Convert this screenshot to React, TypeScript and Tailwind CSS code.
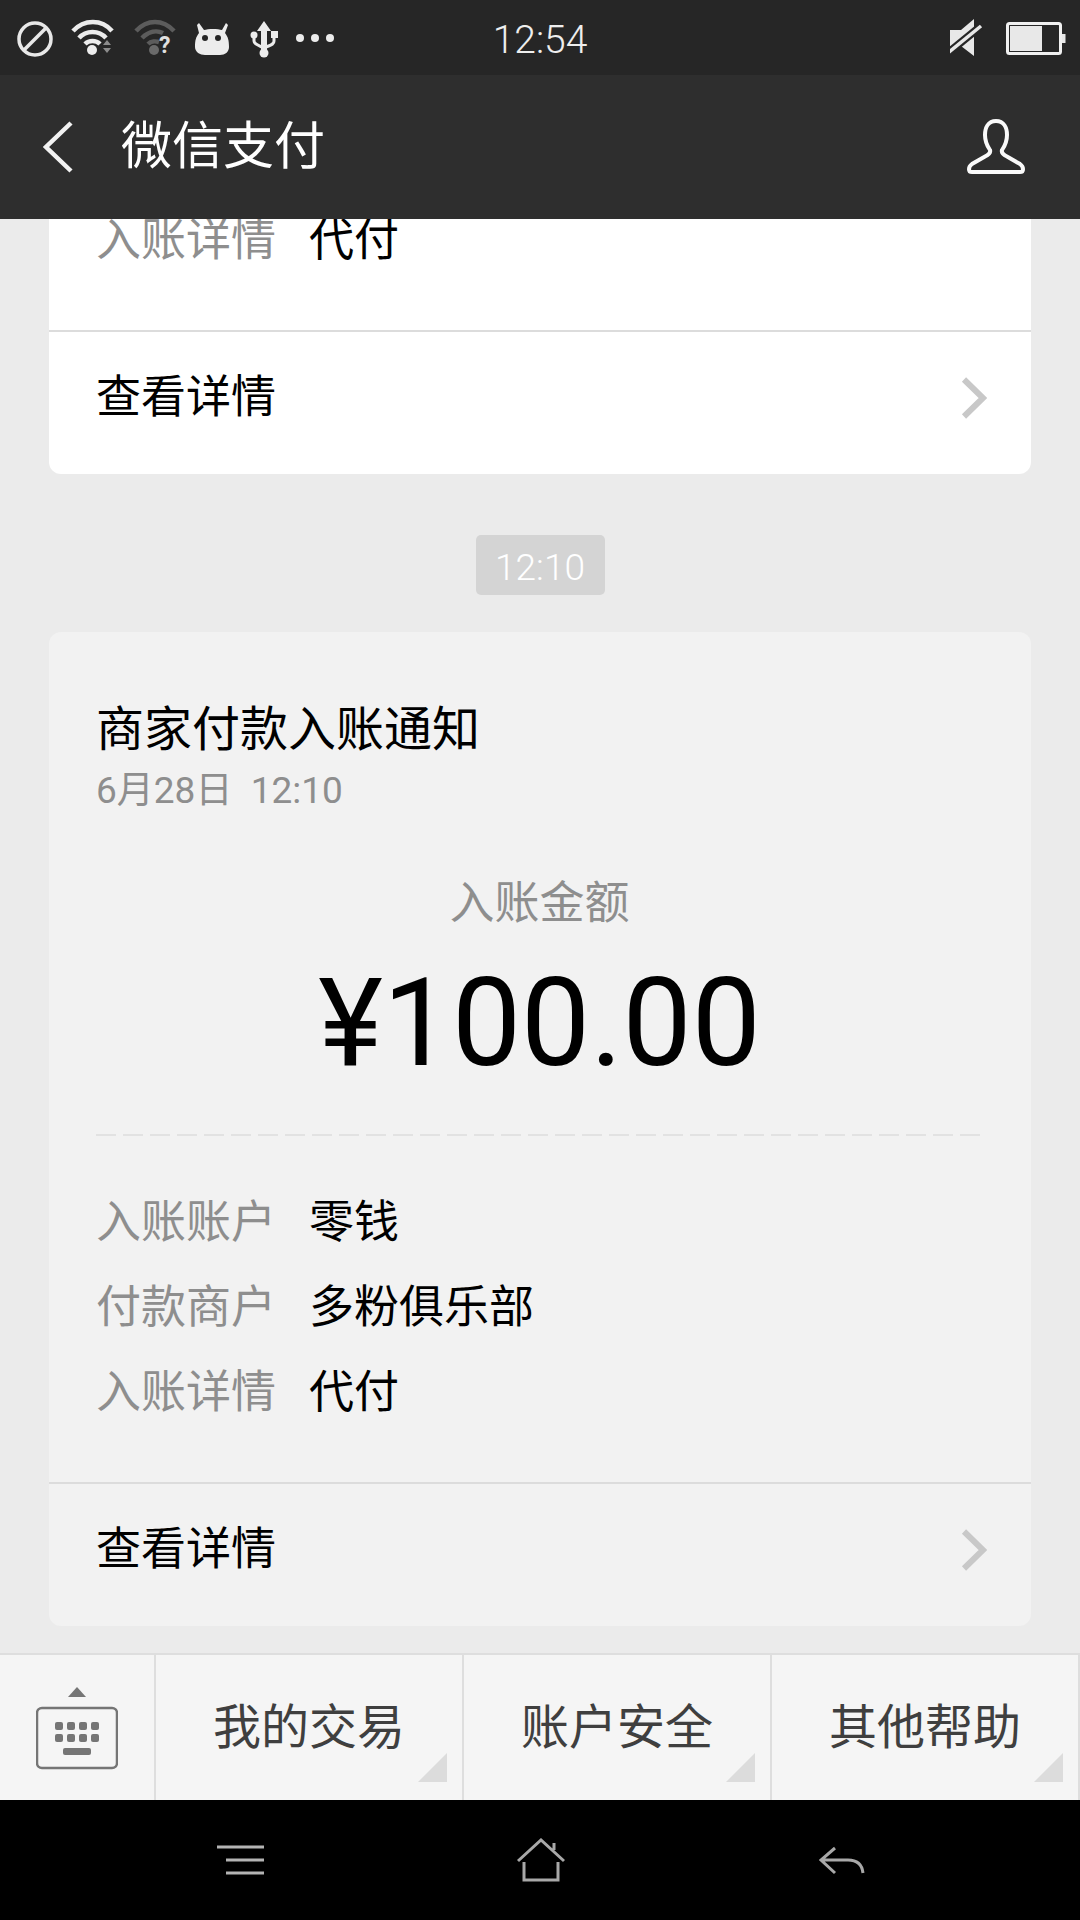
import React from 'react';

const fontStack = "font-['Roboto','Noto_Sans_CJK_SC',sans-serif]";

const Chevron = () => (
  <svg width="26" height="42" viewBox="0 0 26 42" fill="none" className="mr-[1px]">
    <path d="M3 2.5 L22 21 L3 39.5" stroke="#c8c8c8" strokeWidth="6" />
  </svg>
);

const Row = ({ label, value }: { label: string; value: string }) => (
  <div className="flex h-[85px] items-center text-[45px] leading-[85px]">
    <span className="w-[213px] text-[#8e8e8e]">{label}</span>
    <span className="text-black">{value}</span>
  </div>
);

const DetailLink = () => (
  <div className="flex h-[144px] items-center justify-between border-t-2 border-[#dcdcdc] pb-[10px] pl-[47px] pr-[43px] text-[45px] text-black">
    <span>查看详情</span>
    <Chevron />
  </div>
);

const StatusIconsLeft = () => (
  <svg width="350" height="74" viewBox="0 0 350 74" fill="none">
    <circle cx="35" cy="38" r="16" stroke="#e8e8e8" strokeWidth="3.5" />
    <path d="M24 49 L46 27" stroke="#e8e8e8" strokeWidth="3.5" />
    <g stroke="#ececec" strokeWidth="4.5" fill="none">
      <path d="M73 30 C84 18 102 18 112 30" />
      <path d="M79 37 C86 29 99 29 106 37" />
      <path d="M85 43 C89 39 96 39 100 43" />
    </g>
    <circle cx="92" cy="49" r="5" fill="#ececec" />
    <path d="M103 44 L111 44 L107 39 Z M103 47 L111 47 L107 52 Z" fill="#8c8c8c" />
    <g stroke="#5c5c5c" strokeWidth="4.5" fill="none">
      <path d="M136 30 C147 18 163 18 174 30" />
      <path d="M142 37 C149 30 157 29 163 32" />
      <path d="M148 43 C151 40 156 40 159 41" />
    </g>
    <circle cx="154" cy="49" r="5" fill="#6a6a6a" />
    <text x="159" y="52" fill="#e0e0e0" fontSize="23" fontWeight="700" fontFamily="Roboto, sans-serif">?</text>
    <path d="M199 22 L204 29 C208 27.500 218 27.500 222 29 L226 22 L228 24 L225 32 C228 36 229 39 229 46 C229 51 225 54 220 54 L205 54 C200 54 195 51 195 46 C195 39 196 36 199 32 L197 24 Z" fill="#ececec" />
    <circle cx="205" cy="37" r="3" fill="#262626" />
    <circle cx="218" cy="37" r="3" fill="#262626" />
    <path d="M264 20 L271 30 L267 30 L267 50 L261 50 L261 30 L257 30 Z" fill="#ececec" />
    <circle cx="264" cy="52" r="4.500" fill="#ececec" />
    <path d="M254 36 L254 40 C254 43 258 44 264 47 C270 44 274 44 274 40 L274 36" stroke="#ececec" strokeWidth="3" />
    <circle cx="254" cy="34" r="3.500" fill="#ececec" />
    <rect x="271" y="30" width="7" height="7" fill="#ececec" />
    <circle cx="300" cy="37" r="4" fill="#ececec" />
    <circle cx="315" cy="37" r="4" fill="#ececec" />
    <circle cx="330" cy="37" r="4" fill="#ececec" />
  </svg>
);

const StatusIconsRight = () => (
  <svg width="130" height="74" viewBox="950 0 130 74" fill="none">
    <path d="M950 29 L961 29 L974 18 L974 55 L961 45 L950 45 Z" fill="#e8e8e8" />
    <path d="M948 52 L981 25" stroke="#262626" strokeWidth="8" />
    <path d="M948 52 L981 25" stroke="#e8e8e8" strokeWidth="3.5" />
    <rect x="1007.500" y="22.500" width="53" height="30" rx="2" stroke="#f0f0f0" strokeWidth="3" />
    <rect x="1010" y="25" width="32" height="25" fill="#e8e8e8" />
    <rect x="1062" y="33" width="3.500" height="9" fill="#e8e8e8" />
  </svg>
);

const TabCell = ({ label, className }: { label: string; className: string }) => (
  <div className={`relative flex items-center justify-center border-r-2 border-[#dedede] text-[48px] text-[#3f3f3f] ${className}`}>
    {label}
    <svg width="29" height="29" viewBox="0 0 29 29" className="absolute bottom-[18px] right-[15px]">
      <path d="M29 0 L29 29 L0 29 Z" fill="#dcdcdc" />
    </svg>
  </div>
);

const App = () => (
  <div className={`flex h-[1920px] w-[1080px] flex-col overflow-hidden bg-[#ebebeb] ${fontStack}`}>
    <div className="grid h-[75px] shrink-0 grid-cols-[1fr_auto_1fr] items-center bg-[#262626]">
      <StatusIconsLeft />
      <span className="pt-[6px] text-[39px] font-light text-[#eeeeee]">12:54</span>
      <div className="justify-self-end">
        <StatusIconsRight />
      </div>
    </div>

    <div className="flex h-[144px] shrink-0 items-center justify-between bg-[#2e2e2e] pl-[43px] pr-[55px] text-white">
      <div className="flex items-center">
        <svg width="30" height="52" viewBox="0 0 30 52" fill="none">
          <path d="M28 2 L3 26 L28 50" stroke="#f2f2f2" strokeWidth="4.500" />
        </svg>
        <span className="ml-[48px] text-[51px] leading-[60px]">微信支付</span>
      </div>
      <svg width="58" height="56" viewBox="0 0 58 56" fill="none">
        <path
          d="M29 2 C21 2 18 9 18 16 C18 24 21 28 23 31 C24 34 21 36 18 37.500 L5 45 C1 48 1 53 5 53 L53 53 C57 53 57 48 53 45 L40 37.500 C37 36 34 34 35 31 C37 28 40 24 40 16 C40 9 37 2 29 2 Z"
          stroke="#fafafa"
          strokeWidth="4"
        />
      </svg>
    </div>

    <div className="flex min-h-0 flex-1 flex-col overflow-hidden px-[49px]">
      <div className="mt-[-21px] shrink-0 rounded-b-[12px] bg-white">
        <div className="pb-[47px] pl-[47px]">
          <Row label="入账详情" value="代付" />
        </div>
        <DetailLink />
      </div>

      <div className="mt-[61px] flex h-[60px] w-[129px] shrink-0 items-center justify-center self-center rounded-[5px] bg-[#d4d4d4] pt-[5px] text-[37px] font-light text-white">
        12:10
      </div>

      <div className="mt-[37px] shrink-0 rounded-[12px] bg-[#f2f2f2]">
        <div className="pl-[47px] pr-[48px] pt-[68px]">
          <div className="text-[48px] leading-[60px] text-black">商家付款入账通知</div>
          <div className="mt-[11px] text-[37px] leading-[40px] text-[#8e8e8e]">6月28日&nbsp;&nbsp;12:10</div>
          <div className="mt-[63px] text-center text-[45px] leading-[60px] text-[#8e8e8e]">入账金额</div>
          <div className="mt-[24px] text-center text-[123px] leading-[130px] text-black">¥100.00</div>
          <div className="mt-[46px] h-[2px] bg-[repeating-linear-gradient(90deg,#e2e2e2_0,#e2e2e2_20px,transparent_20px,transparent_27px)]" />
          <div className="mt-[44px] pb-[47px]">
            <Row label="入账账户" value="零钱" />
            <Row label="付款商户" value="多粉俱乐部" />
            <Row label="入账详情" value="代付" />
          </div>
        </div>
        <DetailLink />
      </div>
    </div>

    <div className="flex h-[147px] shrink-0 border-t-2 border-[#dedede] bg-[#f5f5f5]">
      <div className="flex w-[156px] items-center justify-center border-r-2 border-[#dedede]">
        <svg width="82" height="84" viewBox="0 0 82 84" fill="none">
          <path d="M32 11 L41 1 L50 11 Z" fill="#757575" />
          <rect x="1" y="22" width="80" height="60" rx="5" stroke="#757575" strokeWidth="2.500" />
          <g fill="#757575">
            <rect x="19" y="36" width="8" height="8" rx="2" />
            <rect x="31" y="36" width="8" height="8" rx="2" />
            <rect x="43" y="36" width="8" height="8" rx="2" />
            <rect x="55" y="36" width="8" height="8" rx="2" />
            <rect x="19" y="48" width="8" height="8" rx="2" />
            <rect x="31" y="48" width="8" height="8" rx="2" />
            <rect x="43" y="48" width="8" height="8" rx="2" />
            <rect x="55" y="48" width="8" height="8" rx="2" />
            <rect x="27" y="62" width="28" height="7" rx="2" />
          </g>
        </svg>
      </div>
      <TabCell label="我的交易" className="w-[308px]" />
      <TabCell label="账户安全" className="w-[308px]" />
      <TabCell label="其他帮助" className="flex-1" />
    </div>

    <div className="flex h-[120px] shrink-0 items-start bg-black pl-[217px] pt-[38px]">
      <svg width="47" height="30" viewBox="0 0 47 30" fill="none" className="mt-[7px]">
        <path d="M0 2 L47 2 M9 15 L47 15 M9 28 L47 28" stroke="#b4b4b4" strokeWidth="3" />
      </svg>
      <svg width="50" height="44" viewBox="0 0 50 44" fill="none" className="ml-[252px]">
        <path d="M2 23 L25 2 L48 23 M38 12 L38 5 M8 24 L8 42 L42 42 L42 24" stroke="#a8a8a8" strokeWidth="3" />
      </svg>
      <svg width="47" height="30" viewBox="0 0 47 30" fill="none" className="ml-[252px] mt-[8px]">
        <path d="M17 2 L3 14 L17 27 M3 14 L30 14 C39 14 44 18 45 27" stroke="#a8a8a8" strokeWidth="3" />
      </svg>
    </div>
  </div>
);

export default App;
